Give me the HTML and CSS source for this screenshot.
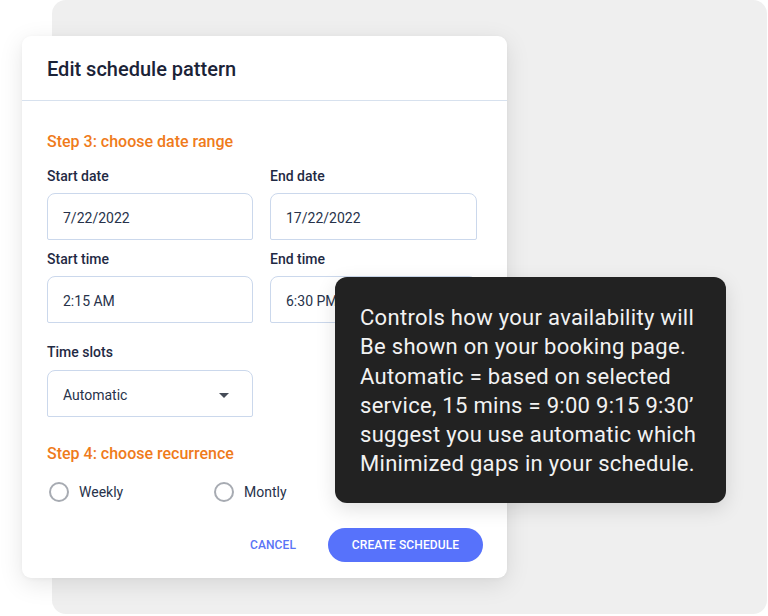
FILE: index.html
```html
<!DOCTYPE html>
<html lang="en">
<head>
    <meta charset="UTF-8">
    <meta name="viewport" content="width=device-width, initial-scale=1.0">
    <title>Edit schedule pattern</title>
    <link rel="stylesheet" href="styles.css">
</head>
<body>
    <div class="stage">
        <!-- Grey backdrop with the dialog over it -->
        <div class="backdrop">
            <section class="dialog">
                <header class="dialog-header">
                    <h1>Edit schedule pattern</h1>
                </header>

                <div class="dialog-body">
                    <h2 class="step">Step 3: choose date range</h2>

                    <div class="field-grid">
                        <div class="field">
                            <label>Start date</label>
                            <div class="input">7/22/2022</div>
                        </div>
                        <div class="field">
                            <label>End date</label>
                            <div class="input">17/22/2022</div>
                        </div>
                        <div class="field">
                            <label>Start time</label>
                            <div class="input">2:15 AM</div>
                        </div>
                        <div class="field">
                            <label>End time</label>
                            <div class="input">6:30 PM</div>
                        </div>
                        <div class="field field-slots">
                            <label>Time slots</label>
                            <div class="input select">
                                <span>Automatic</span>
                                <span class="caret"></span>
                            </div>
                        </div>
                    </div>

                    <h2 class="step step-4">Step 4: choose recurrence</h2>

                    <div class="radio-group">
                        <div class="radio"><span class="radio-dot"></span>Weekly</div>
                        <div class="radio"><span class="radio-dot"></span>Montly</div>
                    </div>

                    <div class="actions">
                        <button class="btn-text">Cancel</button>
                        <button class="btn-primary">Create schedule</button>
                    </div>
                </div>
            </section>
        </div>

        <!-- Tooltip for time slots -->
        <div class="tooltip">
            Controls how your availability will<br>
            Be shown on your booking page.<br>
            Automatic = based on selected<br>
            service, 15 mins = 9:00 9:15 9:30’<br>
            suggest you use automatic which<br>
            Minimized gaps in your schedule.
        </div>
    </div>
</body>
</html>
```

FILE: styles.css
```css
/* Basic reset */
* {
    margin: 0;
    padding: 0;
    box-sizing: border-box;
}

body {
    font-family: Roboto, "Liberation Sans", sans-serif;
    background-color: #ffffff;
    color: #1f2a44;
}

.stage {
    position: relative;
    width: 768px;
    height: 616px;
    overflow: hidden;
}

/* Grey backdrop */
.backdrop {
    margin-left: 52px;
    width: 715px;
    height: 614px;
    background-color: #efefef;
    border-radius: 14px;
    padding-top: 36px;
}

/* Dialog card */
.dialog {
    margin-left: -30px;
    width: 485px;
    height: 542px;
    background-color: #ffffff;
    border-radius: 9px;
    box-shadow: 0 6px 24px rgba(0, 0, 0, 0.10), 0 1px 4px rgba(0, 0, 0, 0.04);
}

.dialog-header {
    height: 65px;
    padding: 0 25px;
    display: flex;
    align-items: center;
    border-bottom: 1px solid #d7e1ee;
}

.dialog-header h1 {
    font-size: 20px;
    font-weight: 500;
    color: #1b2337;
    margin-top: 2px;
}

.dialog-body {
    padding: 31px 24px 0 25px;
}

.step {
    font-size: 16px;
    font-weight: 500;
    line-height: 20px;
    color: #ef7b1b;
}

.step-4 {
    margin-top: 27px;
}

/* Form fields */
.field-grid {
    display: grid;
    grid-template-columns: 206px 207px;
    column-gap: 17px;
    row-gap: 10px;
    margin-top: 15px;
}

.field-slots {
    margin-top: 10px;
}

.field label {
    display: block;
    font-size: 14px;
    font-weight: 500;
    line-height: 18px;
    color: #1f2a44;
    margin-bottom: 8px;
}

.field-slots label {
    margin-bottom: 9px;
}

.input {
    height: 47px;
    border: 1px solid #cbd8ec;
    border-radius: 8px 8px 2px 2px;
    padding: 3px 15px 0;
    display: flex;
    align-items: center;
    font-size: 14px;
    color: #27324a;
}

.select {
    justify-content: space-between;
}

.caret {
    width: 0;
    height: 0;
    margin-right: 8px;
    border-left: 5px solid transparent;
    border-right: 5px solid transparent;
    border-top: 5px solid #454b57;
}

/* Radios */
.radio-group {
    display: grid;
    grid-template-columns: 165px auto;
    margin-top: 16px;
    padding-left: 2px;
}

.radio {
    display: flex;
    align-items: center;
    gap: 10px;
    height: 24px;
    font-size: 14px;
    color: #27324a;
}

.radio-dot {
    width: 20px;
    height: 20px;
    border: 2px solid #a7abb2;
    border-radius: 50%;
}

/* Buttons */
.actions {
    display: flex;
    justify-content: flex-end;
    align-items: center;
    gap: 16px;
    margin-top: 24px;
}

.actions button {
    font-family: inherit;
    font-size: 12px;
    font-weight: 500;
    text-transform: uppercase;
    letter-spacing: 0.1px;
    border: none;
    cursor: pointer;
}

.btn-text {
    background: none;
    color: #5a74f6;
    padding: 0 16px;
    height: 34px;
}

.btn-primary {
    background-color: #5772fb;
    color: #ffffff;
    height: 34px;
    width: 155px;
    border-radius: 17px;
}

/* Tooltip */
.tooltip {
    position: absolute;
    left: 335px;
    top: 277px;
    width: 391px;
    height: 226px;
    padding: 26px 10px 0 25px;
    background-color: #222222;
    border-radius: 12px;
    color: #f2f2f2;
    font-size: 22px;
    letter-spacing: 0.3px;
    line-height: 29.3px;
    box-shadow: 0 6px 20px rgba(0, 0, 0, 0.12);
}
```
